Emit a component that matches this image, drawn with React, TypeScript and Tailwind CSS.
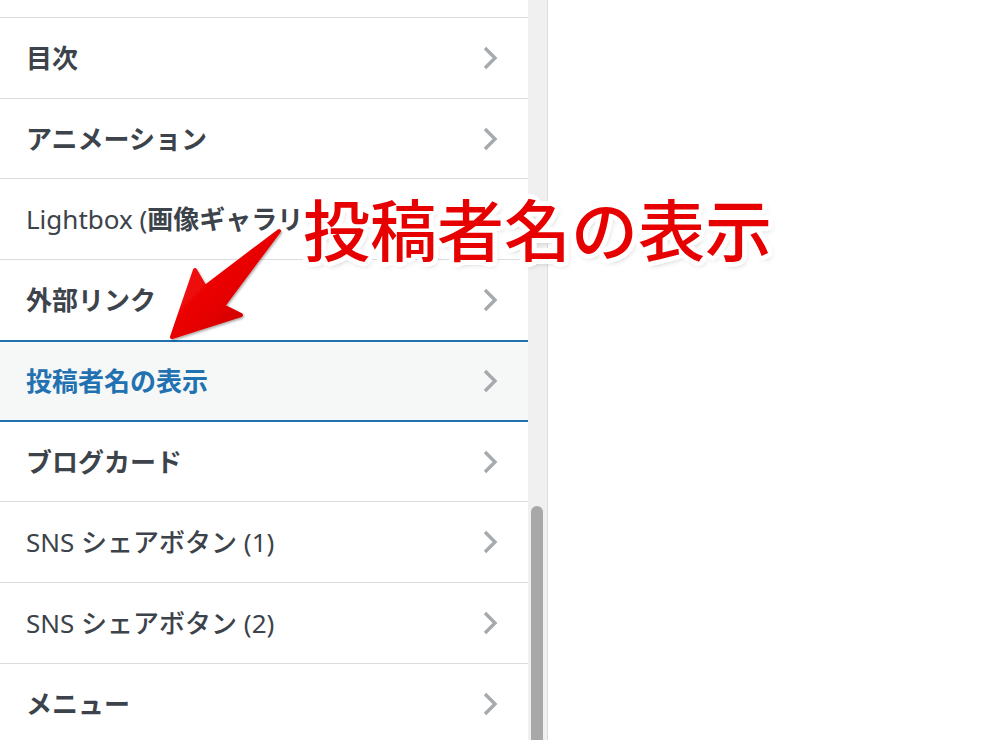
import React from 'react'

type Part = { text: string; weight: string }
type Item = { parts: Part[]; active?: boolean }

const bold = (text: string): Part => ({ text, weight: 'font-bold' })
const normal = (text: string): Part => ({ text, weight: 'font-normal' })
const medium = (text: string): Part => ({ text, weight: 'font-medium' })

const items: Item[] = [
  { parts: [bold('目次')] },
  { parts: [bold('アニメーション')] },
  { parts: [normal('Lightbox ('), bold('画像ギャラリー'), normal(')')] },
  { parts: [bold('外部リンク')] },
  { parts: [bold('投稿者名の表示')], active: true },
  { parts: [bold('ブログカード')] },
  { parts: [normal('SNS '), medium('シェアボタン'), normal(' (1)')] },
  { parts: [normal('SNS '), medium('シェアボタン'), normal(' (2)')] },
  { parts: [bold('メニュー')] },
]

function Chevron() {
  return (
    <svg width="18" height="26" viewBox="0 0 18 26" className="shrink-0">
      <polyline
        points="3,3 13,13 3,23"
        fill="none"
        stroke="#a7aaad"
        strokeWidth="3.4"
        strokeLinecap="butt"
        strokeLinejoin="miter"
      />
    </svg>
  )
}

function Label({ item }: { item: Item }) {
  return (
    <span className="whitespace-nowrap text-[26px] leading-none">
      {item.parts.map((p, i) => (
        <span key={i} className={p.weight}>
          {p.text}
        </span>
      ))}
    </span>
  )
}

function Row({ item, beforeActive }: { item: Item; beforeActive: boolean }) {
  if (item.active) {
    return (
      <div className="-mt-px h-[82px] shrink-0 flex flex-col bg-[#f6f7f7] text-[#2271b1]">
        <div className="h-[2px] shrink-0 bg-[#2271b1]" />
        <div className="flex-1 flex items-center justify-between pl-[26px] pr-[28px]">
          <Label item={item} />
          <Chevron />
        </div>
        <div className="h-[1.5px] shrink-0 bg-[#2271b1]" />
      </div>
    )
  }
  return (
    <div
      className={
        beforeActive
          ? 'h-[80.7px] shrink-0 flex items-center justify-between pl-[26px] pr-[28px] bg-white text-[#3c434a]'
          : 'h-[80.7px] shrink-0 flex items-center justify-between pl-[26px] pr-[28px] bg-white text-[#3c434a] border-b border-[#dcdcde]'
      }
    >
      <Label item={item} />
      <Chevron />
    </div>
  )
}

export default function App() {
  return (
    <div className="relative w-[1000px] h-[740px] overflow-hidden bg-white flex font-['Noto_Sans','Noto_Sans_CJK_JP',sans-serif]">
      <div className="w-[528px] shrink-0 flex flex-col">
        <div className="h-[18px] shrink-0 border-b border-[#dcdcde]" />
        {items.map((item, i) => (
          <Row key={i} item={item} beforeActive={!!items[i + 1]?.active} />
        ))}
      </div>

      <div className="w-[20px] shrink-0 bg-[#f0f0f0] border-r border-[#dcdcde] flex flex-col pt-[506px] pl-[3px] pr-[4px]">
        <div className="flex-1 rounded-t-full bg-[#a8a8a8]" />
      </div>

      <div className="flex-1 bg-white" />

      {/* annotation */}
      <svg
        className="absolute inset-0 pointer-events-none"
        width="1000"
        height="740"
        viewBox="0 0 1000 740"
      >
        <defs>
          <linearGradient id="arrowFill" x1="0" y1="0" x2="1" y2="1">
            <stop offset="0" stopColor="#ff1a1a" />
            <stop offset="0.55" stopColor="#e60000" />
            <stop offset="1" stopColor="#b80000" />
          </linearGradient>
          <filter id="arrowShadow" x="-20%" y="-20%" width="140%" height="140%">
            <feDropShadow dx="1" dy="1.5" stdDeviation="1.2" floodColor="#000" floodOpacity="0.35" />
          </filter>
        </defs>
        <path
          d="M279 231 L205 287 L195 270 L172 337 L241 315 L223 306 Z"
          fill="url(#arrowFill)"
          stroke="url(#arrowFill)"
          strokeWidth="4"
          strokeLinejoin="round"
          filter="url(#arrowShadow)"
        />
      </svg>

      <div className="absolute left-[303px] top-[193px] whitespace-nowrap text-[67px] leading-none font-medium text-[#e60000] font-['Noto_Sans_CJK_JP',sans-serif] [text-shadow:5px_0_0_#fff,4.3px_2.5px_0_#fff,2.5px_4.3px_0_#fff,0_5px_0_#fff,-2.5px_4.3px_0_#fff,-4.3px_2.5px_0_#fff,-5px_0_0_#fff,-4.3px_-2.5px_0_#fff,-2.5px_-4.3px_0_#fff,0_-5px_0_#fff,2.5px_-4.3px_0_#fff,4.3px_-2.5px_0_#fff,2px_3px_6px_rgba(0,0,0,0.35)]">
        投稿者名の表示
      </div>
    </div>
  )
}
